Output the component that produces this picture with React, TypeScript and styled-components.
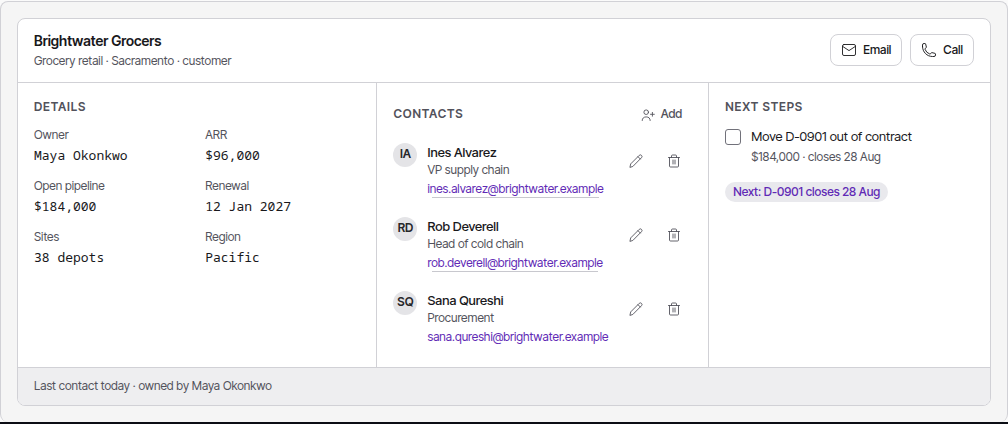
import React from "react";
import styled, { createGlobalStyle } from "styled-components";

const Global = createGlobalStyle`
  *, *::before, *::after { box-sizing: border-box; }
  html { background: #0b0d14; }
  body { margin: 0; font: 400 12px/18px "Inter Tight", "Inter Display", Inter, sans-serif; color: #18181b; }
  h2, h3, p, ul, dl, dd { margin: 0; padding: 0; }
  ul { list-style: none; }
  button { font: inherit; color: inherit; cursor: pointer; }
`;

const Page = styled.main`
  padding-top: 1px;
  background: #fafafa;
`;
const Frame = styled.div`
  padding: 16px;
  background: #f5f5f5;
  border: 1px solid #d1d1d6;
  border-bottom: 0;
  border-radius: 8px;
`;
const Card = styled.article`
  background: #fff;
  border: 1px solid #d1d1d6;
  border-radius: 8px;
  overflow: hidden;
`;
const Header = styled.header`
  display: flex;
  align-items: center;
  justify-content: space-between;
  padding: 12px 16px;
  border-bottom: 1px solid #d1d1d6;
`;
const Title = styled.h2`
  margin-bottom: 1px;
  font-size: 14px;
  line-height: 20px;
  font-weight: 600;
`;
const Muted = styled.p`
  color: #52525b;
`;
const Actions = styled.div`
  display: flex;
  gap: 8px;
  padding-bottom: 1px;
`;
const Button = styled.button`
  display: flex;
  align-items: center;
  gap: 6px;
  height: 32px;
  padding: 0 10px;
  background: #fff;
  border: 1px solid #d1d1d6;
  border-radius: 8px;
  font-weight: 500;
`;
const Columns = styled.div`
  display: grid;
  grid-template-columns: 215fr 199fr 169fr;
`;
const Column = styled.section`
  min-width: 0;
  padding: 16px;
  & + & { border-left: 1px solid #d1d1d6; }
`;
const Heading = styled.h3`
  font-size: 12px;
  line-height: 16px;
  font-weight: 600;
  letter-spacing: 0.07em;
  text-transform: uppercase;
  color: #52525b;
`;
const Facts = styled.dl`
  display: grid;
  grid-template-columns: 1fr 1fr;
  gap: 10px 16px;
  margin-top: 10px;
`;
const Term = styled.dt`
  line-height: 20px;
  color: #52525b;
`;
const Value = styled.dd`
  font: 13px/21px "Noto Sans Mono", "Liberation Mono", monospace;
`;
const HeadingRow = styled.div`
  display: flex;
  align-items: center;
  justify-content: space-between;
`;
const QuietButton = styled.button`
  display: flex;
  align-items: center;
  gap: 6px;
  height: 30px;
  padding: 0 10px;
  border: 0;
  background: none;
  font-weight: 500;
  color: #52525b;
`;
const Contact = styled.li`
  display: flex;
  align-items: flex-start;
  gap: 10px;
  padding: 14px 0 5px;
`;
const Avatar = styled.span`
  flex: none;
  width: 24px;
  height: 24px;
  border-radius: 50%;
  background: #e4e4e7;
  color: #27272a;
  line-height: 22px;
  font-weight: 600;
  text-align: center;
`;
const Person = styled.div`
  display: flex;
  flex: 1;
  flex-direction: column;
  align-items: flex-start;
  min-width: 0;
`;
const Name = styled.p`
  font-size: 13px;
  font-weight: 500;
`;
const Mail = styled.a`
  padding: 2px 0 1px;
  line-height: 16px;
  color: #6029b5;
  text-decoration: none;
  background: linear-gradient(#c8c8ce, #c8c8ce) center bottom / calc(100% - 10px) 1px no-repeat;
  ${Contact}:last-child & { background: none; }
`;
const RowActions = styled.div`
  display: flex;
  gap: 2px;
`;
const IconButton = styled.button`
  display: grid;
  place-items: center;
  width: 36px;
  height: 36px;
  padding: 0;
  border: 0;
  background: none;
  color: #52525b;
`;
const Task = styled.div`
  display: flex;
  gap: 10px;
  margin-top: 12px;
`;
const Check = styled.input`
  appearance: none;
  flex: none;
  width: 16px;
  height: 16px;
  margin: 2px 0 0;
  background: #fff;
  border: 1px solid #71717a;
  border-radius: 3px;
`;
const TaskText = styled.div`
  display: grid;
  gap: 3px;
`;
const TaskLabel = styled.label`
  font-size: 13px;
`;
const Chip = styled.span`
  display: inline-block;
  margin-top: 16px;
  padding: 0 8px;
  border-radius: 10px;
  background: #e9e9ed;
  color: #6029b5;
  font-weight: 500;
  line-height: 20px;
`;
const Footer = styled.footer`
  padding: 9px 16px 10px;
  border-top: 1px solid #d1d1d6;
  background: #eeeef0;
  color: #52525b;
`;

const Svg = styled.svg`
  flex: none;
  fill: none;
  stroke: currentColor;
  stroke-linecap: round;
  stroke-linejoin: round;
`;
const MailIcon = () => (
  <Svg width="16" height="16" viewBox="0 0 16 16" strokeWidth="0.9" aria-hidden="true">
    <rect x="1.5" y="2.5" width="13" height="11" rx="1.5" />
    <path d="M1.8 4.500 8 8.600l6.200-4.100" />
  </Svg>
);
const PhoneIcon = () => (
  <Svg width="16" height="16" viewBox="0 0 24 24" strokeWidth="1.4" aria-hidden="true">
    <path d="M2.250 6.750c0 8.284 6.716 15 15 15h2.250a2.250 2.250 0 0 0 2.250-2.250v-1.372c0-.516-.351-.966-.852-1.091l-4.423-1.106c-.44-.11-.902.055-1.173.417l-.97 1.293c-.282.376-.769.542-1.210.38a12.035 12.035 0 0 1-7.143-7.143c-.162-.441.004-.928.380-1.210l1.293-.970c.363-.271.527-.734.417-1.173L6.963 3.102a1.125 1.125 0 0 0-1.091-.852H4.500A2.250 2.250 0 0 0 2.250 4.500v2.250Z" />
  </Svg>
);
const AddPersonIcon = () => (
  <Svg width="14" height="14" viewBox="0 0 14 14" strokeWidth="0.9" aria-hidden="true">
    <circle cx="5.200" cy="5.200" r="2.300" />
    <path d="M1.200 13.500c0-2.300 1.600-3.600 4-3.600s4 1.300 4 3.600M9.500 7.300h3.800M11.400 5.400v3.800" />
  </Svg>
);
const PencilIcon = () => (
  <Svg width="16" height="16" viewBox="0 0 16 16" strokeWidth="0.9" aria-hidden="true">
    <path d="M2 14l.7-3.100L11.200 2.400a1.500 1.500 0 0 1 2.300 2.300L5.100 13.200zM10 3.700l2.300 2.300" />
  </Svg>
);
const TrashIcon = () => (
  <Svg width="16" height="16" viewBox="0 0 16 16" strokeWidth="0.9" aria-hidden="true">
    <path d="M2.500 4.500h11M5.500 4.500V3a1 1 0 0 1 1-1h3a1 1 0 0 1 1 1v1.500M3.500 4.500V13a1 1 0 0 0 1 1h7a1 1 0 0 0 1-1V4.500M7 7v4M9 7v4" />
  </Svg>
);

const facts = [
  ["Owner", "Maya Okonkwo"],
  ["ARR", "$96,000"],
  ["Open pipeline", "$184,000"],
  ["Renewal", "12 Jan 2027"],
  ["Sites", "38 depots"],
  ["Region", "Pacific"],
];
const contacts = [
  { initials: "IA", name: "Ines Alvarez", role: "VP supply chain", mail: "ines.alvarez@brightwater.example" },
  { initials: "RD", name: "Rob Deverell", role: "Head of cold chain", mail: "rob.deverell@brightwater.example" },
  { initials: "SQ", name: "Sana Qureshi", role: "Procurement", mail: "sana.qureshi@brightwater.example" },
];

export default function App() {
  return (
    <>
      <Global />
      <Page>
        <Frame>
          <Card>
            <Header>
              <div>
                <Title>Brightwater Grocers</Title>
                <Muted>Grocery retail · Sacramento · customer</Muted>
              </div>
              <Actions>
                <Button type="button"><MailIcon />Email</Button>
                <Button type="button"><PhoneIcon />Call</Button>
              </Actions>
            </Header>
            <Columns>
              <Column>
                <Heading>Details</Heading>
                <Facts>
                  {facts.map(([term, value]) => (
                    <div key={term}><Term>{term}</Term><Value>{value}</Value></div>
                  ))}
                </Facts>
              </Column>
              <Column>
                <HeadingRow>
                  <Heading>Contacts</Heading>
                  <QuietButton type="button"><AddPersonIcon />Add</QuietButton>
                </HeadingRow>
                <ul>
                  {contacts.map((c) => (
                    <Contact key={c.initials}>
                      <Avatar>{c.initials}</Avatar>
                      <Person>
                        <Name>{c.name}</Name>
                        <Muted>{c.role}</Muted>
                        <Mail href={`mailto:${c.mail}`}>{c.mail}</Mail>
                      </Person>
                      <RowActions>
                        <IconButton type="button" aria-label={`Edit ${c.name}`}><PencilIcon /></IconButton>
                        <IconButton type="button" aria-label={`Remove ${c.name}`}><TrashIcon /></IconButton>
                      </RowActions>
                    </Contact>
                  ))}
                </ul>
              </Column>
              <Column>
                <Heading>Next steps</Heading>
                <Task>
                  <Check type="checkbox" id="task-contract" />
                  <TaskText>
                    <TaskLabel htmlFor="task-contract">Move D-0901 out of contract</TaskLabel>
                    <Muted>$184,000 · closes 28 Aug</Muted>
                  </TaskText>
                </Task>
                <Chip>Next: D-0901 closes 28 Aug</Chip>
              </Column>
            </Columns>
            <Footer>Last contact today · owned by Maya Okonkwo</Footer>
          </Card>
        </Frame>
      </Page>
    </>
  );
}
